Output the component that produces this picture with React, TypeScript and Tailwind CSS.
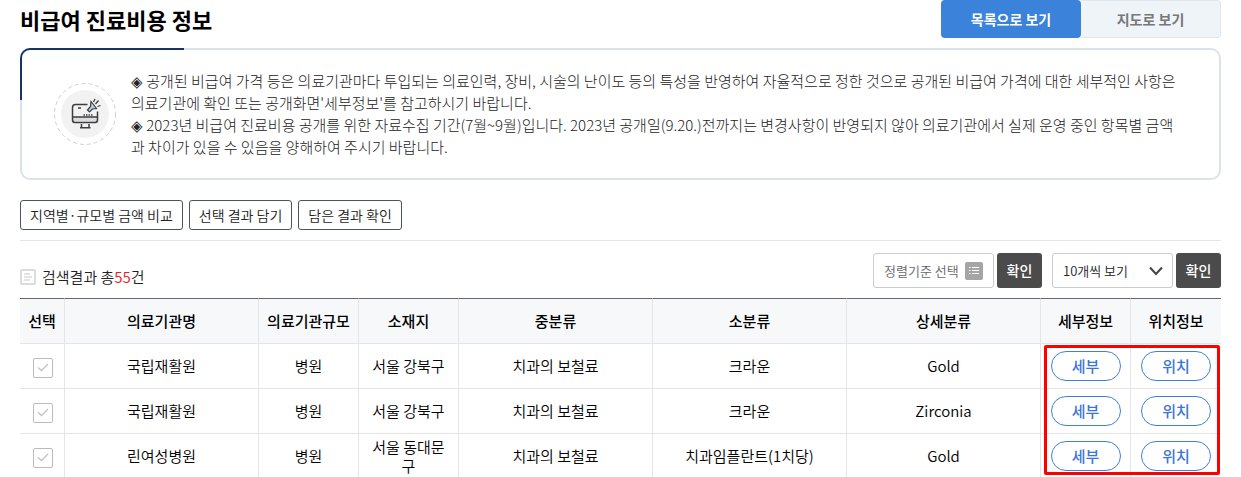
import type { ReactNode } from 'react';

interface Row { name: string; scale: string; region: string; mid: string; sub: string; detail: string }

const rows: Row[] = [
  { name: '국립재활원', scale: '병원', region: '서울 강북구', mid: '치과의 보철료', sub: '크라운', detail: 'Gold' },
  { name: '국립재활원', scale: '병원', region: '서울 강북구', mid: '치과의 보철료', sub: '크라운', detail: 'Zirconia' },
  { name: '린여성병원', scale: '병원', region: '서울 동대문구', mid: '치과의 보철료', sub: '치과임플란트(1치당)', detail: 'Gold' },
];

const columns = [
  { label: '선택', width: 'w-[45px]' },
  { label: '의료기관명', width: '' },
  { label: '의료기관규모', width: 'w-[100px]' },
  { label: '소재지', width: 'w-[100px]' },
  { label: '중분류', width: '' },
  { label: '소분류', width: '' },
  { label: '상세분류', width: '' },
  { label: '세부정보', width: 'w-[90px]' },
  { label: '위치정보', width: 'w-[90px]' },
];

export default function App() {
  return (
    <main className="h-screen overflow-hidden bg-white px-5 font-['Noto_Sans_CJK_KR','Noto_Sans_KR',sans-serif] text-[15px] text-black">
      <header className="flex h-[38px] items-start justify-between">
        <h1 className="text-[22px] leading-[38px] font-bold">비급여 진료비용 정보</h1>
        <div className="flex h-full text-sm font-bold">
          <button className="w-[140px] rounded bg-[#3b82db] text-white">목록으로 보기</button>
          <button className="w-[140px] rounded-r border border-l-0 border-[#e1e8ed] bg-[#eff4f8] text-[#777]">지도로 보기</button>
        </div>
      </header>

      <section className="relative mt-[10px] flex h-[132px] items-center rounded-[10px] border-2 border-[#dae4e8] pr-10 pl-8">
        <span className="absolute -top-0.5 -left-0.5 h-[52px] w-[164px] rounded-tl-[10px] border-t-2 border-l-2 border-[#183467]" />
        <NoticeIcon />
        <p className="ml-[15px] leading-[22px] font-light text-[#222]">
          ◈ 공개된 비급여 가격 등은 의료기관마다 투입되는 의료인력, 장비, 시술의 난이도 등의 특성을 반영하여 자율적으로 정한 것으로 공개된 비급여 가격에 대한 세부적인 사항은 의료기관에 확인 또는 공개화면'세부정보'를 참고하시기 바랍니다.
          <br />
          ◈ 2023년 비급여 진료비용 공개를 위한 자료수집 기간(7월~9월)입니다. 2023년 공개일(9.20.)전까지는 변경사항이 반영되지 않아 의료기관에서 실제 운영 중인 항목별 금액과 차이가 있을 수 있음을 양해하여 주시기 바랍니다.
        </p>
      </section>

      <div className="mt-5 flex gap-1.5 border-b border-[#e5e5e5] pb-[10px]">
        <OutlineButton>지역별·규모별 금액 비교</OutlineButton>
        <OutlineButton>선택 결과 담기</OutlineButton>
        <OutlineButton>담은 결과 확인</OutlineButton>
      </div>

      <div className="mt-3 mb-[10px] flex h-[35px] items-start justify-between">
        <p className="mt-3 flex items-center gap-1.5 leading-6 font-[350] text-[#222]">
          <ListIcon />
          <span>검색결과 총<span className="text-[#e6212a]">55</span>건</span>
        </p>
        <div className="flex h-full text-[13px]">
          <button className="flex w-[121px] items-center gap-1.5 rounded-[3px] border border-[#ccc] pl-[10px] font-[350] text-[#666]">
            정렬기준 선택
            <SortIcon />
          </button>
          <ConfirmButton />
          <div className="relative ml-[10px] flex w-[121px]">
            <select aria-label="목록 개수" className="w-full appearance-none rounded-[3px] border border-[#ccc] bg-white pl-[10px] font-[350] text-[#222]">
              <option>10개씩 보기</option>
              <option>20개씩 보기</option>
            </select>
            <svg className="pointer-events-none absolute top-[13px] right-[10px]" width="14" height="10" viewBox="0 0 14 10" fill="none" stroke="#444" strokeWidth="2">
              <path d="M1 1.5 7 8l6-6.5" />
            </svg>
          </div>
          <ConfirmButton />
        </div>
      </div>

      <div className="relative">
        <table className="w-full table-fixed border-separate border-spacing-0 text-center">
          <thead>
            <tr className="h-[46px] bg-[#f6f8fa]">
              {columns.map((c) => (
                <th key={c.label} className={`${c.width} border-t border-r border-b border-t-[#666] border-r-[#e5e5e5] border-b-[#e5e5e5] font-medium last:border-r-0`}>{c.label}</th>
              ))}
            </tr>
          </thead>
          <tbody>
            {rows.map((r, i) => (
              <tr key={i} className="h-[45px]">
                <Cell>
                  <label className="mt-1 ml-px inline-grid size-5 place-items-center rounded-xs border border-[#bbb] align-middle">
                    <input type="checkbox" aria-label={`${r.name} 선택`} className="col-start-1 row-start-1 size-[18px] appearance-none" />
                    <svg className="col-start-1 row-start-1" width="12" height="9" viewBox="0 0 12 9" fill="none" stroke="#c4c4c4" strokeWidth="1.4">
                      <path d="m1 4.5 3.5 3L11 1" />
                    </svg>
                  </label>
                </Cell>
                <Cell>{r.name}</Cell>
                <Cell>{r.scale}</Cell>
                <Cell>{r.region}</Cell>
                <Cell>{r.mid}</Cell>
                <Cell>{r.sub}</Cell>
                <Cell>{r.detail}</Cell>
                <Cell><PillButton>세부</PillButton></Cell>
                <Cell><PillButton>위치</PillButton></Cell>
              </tr>
            ))}
          </tbody>
        </table>
        <div className="pointer-events-none absolute top-[47px] right-px h-[130px] w-[176px] rounded-xs border-3 border-[#ff0000]" />
      </div>
    </main>
  );
}

function Cell({ children }: { children: ReactNode }) {
  return <td className="border-r border-b border-[#e5e5e5] px-2 pb-px leading-[19px] font-[350] last:border-r-0">{children}</td>;
}

function OutlineButton({ children }: { children: ReactNode }) {
  return <button className="h-[30px] rounded-[3px] border border-[#4b5260] px-[9px] pb-px text-sm font-[350] whitespace-nowrap text-[#222]">{children}</button>;
}

function ConfirmButton() {
  return <button className="ml-[3px] w-[45px] rounded-[3px] bg-[#4b4b4b] pb-0.5 text-sm font-medium text-white">확인</button>;
}

function PillButton({ children }: { children: ReactNode }) {
  return <button className="h-[30px] w-[70px] rounded-full border border-[#3b82db] align-middle font-medium text-[#3b76d4]">{children}</button>;
}

function NoticeIcon() {
  return (
    <svg className="shrink-0" width="62" height="62" viewBox="0 0 62 62" fill="none">
      <circle cx="31" cy="31" r="30.5" stroke="#cfcfd6" strokeDasharray="4 3" />
      <circle cx="31" cy="31" r="24" fill="#f2f2f2" />
      <path d="M19 34h24v4.5H19z" fill="#dcdcde" />
      <g stroke="#3d3d40" strokeWidth="1.5">
        <path d="M33.5 21.5h-12a3 3 0 0 0-3 3V37a2.5 2.5 0 0 0 2.5 2.5h20a2.5 2.5 0 0 0 2.5-2.5v-8.5M18.5 34h25M24 25h3" />
        <path d="M29.5 32h10" strokeDasharray="1.5 1" />
        <path d="M27.5 41v3.7M35 41v3.7M26 44.7h10.5" />
        <path d="m33.5 27 3-3.500.5-5 5.500 7-4 .5-3 3z" fill="#b9cfe0" strokeWidth="1.2" />
        <path d="m39.5 19 1.5-3M41.5 21l3-3.5M43.5 23.5l3-1" strokeWidth="1.3" />
      </g>
    </svg>
  );
}

function ListIcon() {
  return (
    <svg width="16" height="16" viewBox="0 0 16 16" fill="none" stroke="#dcdcdc">
      <rect x="1" y="1" width="14" height="14" rx="1" strokeWidth="2" />
      <path d="M4 5h6M4 8h8M4 11h6" strokeWidth="1.5" />
    </svg>
  );
}

function SortIcon() {
  return (
    <svg width="18" height="18" viewBox="0 0 18 18">
      <rect width="18" height="18" rx="2" fill="#a5a5a5" />
      <path d="M4 5.5h1.5M7 5.5h7M4 8.5h1.5M7 8.5h7M4 11.5h1.5M7 11.5h7" stroke="#fff" />
    </svg>
  );
}
